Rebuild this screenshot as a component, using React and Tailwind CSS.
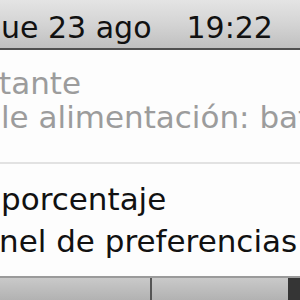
export default function App() {
  const font = { fontFamily: '"DejaVu Sans", "Liberation Sans", sans-serif' };
  return (
    <div className="w-[300px] h-[300px] overflow-hidden flex flex-col bg-white" style={font}>
      <div className="h-[50px] shrink-0 bg-gradient-to-b from-[#e4e4e4] via-[#d4d4d4] to-[#c0c0c0] border-b-2 border-[#505050] flex items-start pt-[13px] pl-[1px] whitespace-nowrap text-[30px] leading-none text-[#111]">
        <span>ue 23 ago</span>
        <span className="ml-[35px]">19:22</span>
      </div>
      <div className="h-[226px] shrink-0 bg-[#fdfdfd] flex flex-col whitespace-nowrap text-[31px] leading-[34px] pt-[16px]">
        <div className="text-[#9c9c9c] -ml-[1px]">tante</div>
        <div className="text-[#9c9c9c] ml-[1px]">le alimentación: batería</div>
        <div className="h-[48px] flex flex-col pt-[28px]">
          <div className="w-full h-[2px] bg-[#e2e2e2]" />
        </div>
        <div className="text-[#111] ml-[1px]">porcentaje</div>
        <div className="text-[#111] -ml-[1px] mt-[8px]">nel de preferencias</div>
      </div>
      <div className="flex-1 flex border-t-2 border-[#9a9a9a] bg-gradient-to-b from-[#c9c9c9] to-[#b2b2b2]">
        <div className="w-[152px] border-r-2 border-[#555]" />
        <div className="flex-1" />
        <div className="w-[12px] bg-[#353535]" />
      </div>
    </div>
  );
}
